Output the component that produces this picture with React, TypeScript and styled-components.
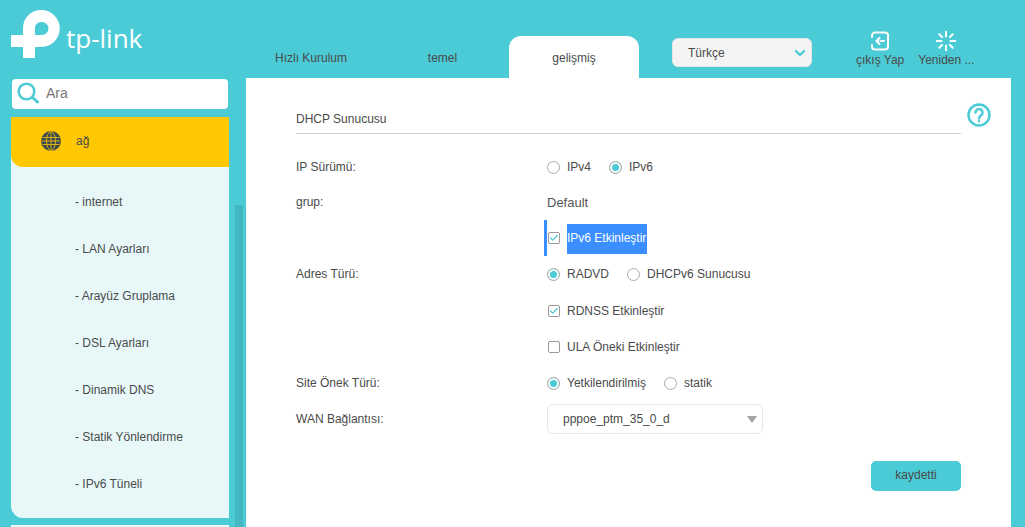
import React from 'react';
import styled, { createGlobalStyle } from 'styled-components';
import { Check, ChevronDown } from 'lucide-react';

const TEAL = '#4acbd6';

const GlobalStyle = createGlobalStyle`
  html, body {
    margin: 0;
    height: 100%;
    overflow: hidden;
    background: ${TEAL};
    font-family: "Liberation Sans", Arial, sans-serif;
    font-size: 12px;
    line-height: 14px;
    color: #4a4a4a;
  }
`;

const menuItems = ['internet', 'LAN Ayarları', 'Arayüz Gruplama', 'DSL Ayarları', 'Dinamik DNS', 'Statik Yönlendirme', 'IPv6 Tüneli'];

const App: React.FC = () => {
  return (
    <Page>
      <GlobalStyle />
      <Header>
        <Logo>
          <svg width="54" height="54" viewBox="0 0 54 54">
            <path
              fillRule="evenodd"
              fill="#fff"
              d="M16 53V42H4V30H16V23A18 18 0 0 1 34 5A18.500 18.500 0 0 1 34.500 42H28V53ZM28 30H35A6.500 6.500 0 0 0 35 17H34A6 6 0 0 0 28 23Z"
            />
          </svg>
          <LogoWord>tp-link</LogoWord>
        </Logo>
        <Tabs>
          <Tab>Hızlı Kurulum</Tab>
          <Tab>temel</Tab>
          <Tab $active>gelişmiş</Tab>
        </Tabs>
        <LangSelect>
          Türkçe
          <ChevronDown size={16} strokeWidth={3.5} color={TEAL} />
        </LangSelect>
        <HeaderActions>
          <HeaderAction>
            <svg width="20" height="20" viewBox="0 0 20 20" fill="none" stroke="#fff" strokeWidth="2" strokeLinecap="round">
              <path d="M2 6V4.500a3 3 0 0 1 3-3h10a3 3 0 0 1 3 3v11a3 3 0 0 1-3 3H5a3 3 0 0 1-3-3V14" />
              <path d="M9.500 7L6.500 10l3 3M7 10h1.500M11 10h3" />
            </svg>
            çıkış Yap
          </HeaderAction>
          <HeaderAction>
            <svg width="20" height="20" viewBox="0 0 20 20" fill="none" stroke="#fff" strokeWidth="2" strokeLinecap="round">
              <path d="M10 0.500v5M10 14.500v5M0.500 10h5M14.500 10h5M3.300 3.300l2.800 2.800M13.900 13.900l2.800 2.800M3.300 16.700l2.800-2.800M13.900 6.100l2.800-2.800" />
            </svg>
            Yeniden ...
          </HeaderAction>
        </HeaderActions>
      </Header>
      <Body>
        <Sidebar>
          <SideColumn>
            <SearchBox>
              <svg width="22" height="22" viewBox="0 0 22 22" fill="none" stroke={TEAL} strokeWidth="2.500">
                <circle cx="9.500" cy="9.500" r="7.800" />
                <path d="M15.500 15.500L20.500 20" strokeWidth="3" strokeLinecap="round" />
              </svg>
              Ara
            </SearchBox>
            <Menu>
              <MenuHead>
                <svg width="20" height="20" viewBox="0 0 20 20" fill="none">
                  <circle cx="10" cy="10" r="10" fill="#3c4a50" />
                  <g stroke="#ffc800" strokeWidth="0.800">
                    <ellipse cx="10" cy="10" rx="4.500" ry="9.500" />
                    <path d="M10 0.500v19M1.500 6.500h17M0.500 10h19M1.500 13.500h17" />
                  </g>
                </svg>
                ağ
              </MenuHead>
              <SubMenu>
                {menuItems.map(item => (
                  <SubItem key={item}>- {item}</SubItem>
                ))}
              </SubMenu>
            </Menu>
            <NextMenu />
          </SideColumn>
          <ScrollTrack />
        </Sidebar>
        <Panel>
          <TitleRow>
            <Title>DHCP Sunucusu</Title>
            <HelpIcon>
              <svg width="24" height="24" viewBox="0 0 24 24" fill="none" stroke={TEAL} strokeWidth="2.500">
                <circle cx="12" cy="12" r="10.500" />
                <path d="M8.500 9.500a3.500 3.500 0 1 1 5.500 2.900c-1.300.9-2 1.500-2 3" strokeLinecap="round" />
                <circle cx="12" cy="18.300" r="0.500" strokeWidth="1.600" />
              </svg>
            </HelpIcon>
          </TitleRow>
          <Form>
            <Row $height={34}>
              <Label>IP Sürümü:</Label>
              <Options>
                <Option><Radio />IPv4</Option>
                <Option><Radio $on />IPv6</Option>
              </Options>
            </Row>
            <Row $height={36}>
              <Label>grup:</Label>
              <StaticValue>Default</StaticValue>
            </Row>
            <Row $height={36}>
              <Label />
              <SelectedOption>
                <CheckBox $on><Check size={10} strokeWidth={3} color={TEAL} /></CheckBox>
                <Highlight>IPv6 Etkinleştir</Highlight>
              </SelectedOption>
            </Row>
            <Row $height={36}>
              <Label>Adres Türü:</Label>
              <Options>
                <Option><Radio $on />RADVD</Option>
                <Option><Radio />DHCPv6 Sunucusu</Option>
              </Options>
            </Row>
            <Row $height={38}>
              <Label />
              <Option><CheckBox $on><Check size={10} strokeWidth={3} color={TEAL} /></CheckBox>RDNSS Etkinleştir</Option>
            </Row>
            <Row $height={34}>
              <Label />
              <Option><CheckBox />ULA Öneki Etkinleştir</Option>
            </Row>
            <Row $height={38}>
              <Label>Site Önek Türü:</Label>
              <Options>
                <Option><Radio $on />Yetkilendirilmiş</Option>
                <Option><Radio />statik</Option>
              </Options>
            </Row>
            <Row $height={34}>
              <Label>WAN Bağlantısı:</Label>
              <WanSelect>pppoe_ptm_35_0_d<Caret /></WanSelect>
            </Row>
          </Form>
          <Actions>
            <SaveButton>kaydetti</SaveButton>
          </Actions>
        </Panel>
      </Body>
    </Page>
  );
};

// Styled Components
const Page = styled.div`
  width: 1025px;
  height: 527px;
  overflow: hidden;
  display: flex;
  flex-direction: column;
`;

const Header = styled.header`
  height: 78px;
  flex: none;
  display: flex;
  align-items: flex-end;
`;

const Logo = styled.div`
  width: 246px;
  height: 78px;
  padding: 5px 0 0 7px;
  box-sizing: border-box;
  display: flex;
  align-items: flex-start;
  flex: none;
`;

const LogoWord = styled.span`
  margin: 16px 0 0 5px;
  font-family: "Open Sans", sans-serif;
  font-weight: 400;
  font-size: 26px;
  line-height: 34px;
  color: #fff;
`;

const Tabs = styled.nav`
  display: flex;
  gap: 1.5px;
  width: 393px;
  flex: none;
`;

const Tab = styled.div<{ $active?: boolean }>`
  width: 130px;
  height: 42px;
  display: flex;
  align-items: center;
  justify-content: center;
  padding-top: 1px;
  box-sizing: border-box;
  border-radius: 12px 12px 0 0;
  background: ${props => (props.$active ? '#fff' : 'transparent')};
`;

const LangSelect = styled.div`
  width: 140px;
  height: 29px;
  margin: 0 0 11px 33px;
  padding: 0 3px 0 15px;
  box-sizing: border-box;
  display: flex;
  align-items: center;
  justify-content: space-between;
  flex: none;
  background: #f4f4f4;
  border: 1px solid #e6e6e6;
  border-radius: 6px;
`;

const HeaderActions = styled.div`
  display: flex;
  margin: 0 0 11px 44px;
  gap: 14px;
`;

const HeaderAction = styled.div`
  display: flex;
  flex-direction: column;
  align-items: center;
  gap: 2px;
  white-space: nowrap;
`;

const Body = styled.div`
  flex: 1;
  display: flex;
  min-height: 0;
`;

const Sidebar = styled.aside`
  width: 246px;
  flex: none;
  display: flex;
  padding-left: 11px;
  box-sizing: border-box;
`;

const SideColumn = styled.div`
  width: 218px;
  flex: none;
  display: flex;
  flex-direction: column;
`;

const SearchBox = styled.div`
  height: 30px;
  margin: 1px 0 8px 1px;
  width: 216px;
  padding: 0 0 2px 5px;
  box-sizing: border-box;
  display: flex;
  align-items: center;
  gap: 7px;
  flex: none;
  background: #fff;
  border-radius: 4px;
  color: #777;
  font-size: 14px;
`;

const Menu = styled.div`
  height: 401px;
  flex: none;
  background: #e8f8f9;
  border-radius: 0 0 0 12px;
  display: flex;
  flex-direction: column;
`;

const MenuHead = styled.div`
  height: 50px;
  flex: none;
  background: #ffc800;
  border-radius: 0 0 0 12px;
  display: flex;
  align-items: center;
  gap: 15px;
  padding: 0 0 3px 30px;
  box-sizing: border-box;
`;

const SubMenu = styled.ul`
  list-style: none;
  margin: 0;
  padding: 12px 0 0 64px;
`;

const SubItem = styled.li`
  height: 47px;
  line-height: 47px;
`;

const NextMenu = styled.div`
  height: 20px;
  margin-top: 7px;
  flex: none;
  background: #e8f8f9;
`;

const ScrollTrack = styled.div`
  width: 8px;
  margin: 127px 0 0 6px;
  flex: none;
  background: #43b8c3;
`;

const Panel = styled.main`
  width: 765px;
  flex: none;
  background: #fff;
  padding: 0 50px;
  box-sizing: border-box;
`;

const TitleRow = styled.div`
  position: relative;
  height: 56px;
  border-bottom: 1px solid #cfcfcf;
  display: flex;
  align-items: flex-end;
  padding-bottom: 7px;
  box-sizing: border-box;
`;

const Title = styled.h2`
  margin: 0;
  font-size: 12px;
  font-weight: 400;
  line-height: 14px;
`;

const HelpIcon = styled.div`
  position: absolute;
  right: -30px;
  top: 25px;
  width: 24px;
  height: 24px;
`;

const Form = styled.div`
  padding-top: 16px;
  display: flex;
  flex-direction: column;
`;

const Row = styled.div<{ $height: number }>`
  height: ${props => props.$height}px;
  display: flex;
  align-items: center;
`;

const Label = styled.div`
  width: 251px;
  flex: none;
`;

const Options = styled.div`
  display: flex;
  gap: 18px;
`;

const Option = styled.label`
  display: flex;
  align-items: center;
  gap: 7px;
`;

const Radio = styled.span<{ $on?: boolean }>`
  width: 13px;
  height: 13px;
  flex: none;
  box-sizing: border-box;
  border: 1px solid #aaa;
  border-radius: 50%;
  background: ${props => (props.$on ? TEAL : '#fff')};
  box-shadow: ${props => (props.$on ? 'inset 0 0 0 2px #fff' : 'none')};
`;

const CheckBox = styled.span<{ $on?: boolean }>`
  width: 12px;
  height: 12px;
  flex: none;
  margin-left: 1px;
  box-sizing: border-box;
  border: 1px solid #999;
  border-radius: 2px;
  display: flex;
  align-items: center;
  justify-content: center;
  background: #fff;
`;

const StaticValue = styled.div`
  padding-top: 2px;
  font-size: 13px;
  color: #555;
`;

const SelectedOption = styled.div`
  position: relative;
  height: 36px;
  display: flex;
  align-items: center;
  gap: 7px;

  &::before {
    content: '';
    position: absolute;
    left: -3px;
    top: 0;
    width: 3px;
    height: 36px;
    background: #3a8eff;
  }
`;

const Highlight = styled.span`
  width: 80px;
  height: 30px;
  margin-top: 2px;
  line-height: 28px;
  overflow: hidden;
  white-space: nowrap;
  background: #3a8eff;
  color: #fff;
`;

const WanSelect = styled.div`
  position: relative;
  width: 216px;
  height: 30px;
  padding-left: 15px;
  box-sizing: border-box;
  display: flex;
  align-items: center;
  border: 1px solid #e6e6e6;
  border-radius: 6px;
`;

const Caret = styled.span`
  position: absolute;
  right: 5px;
  top: 11px;
  border-left: 5px solid transparent;
  border-right: 5px solid transparent;
  border-top: 7px solid #a3a3a3;
`;

const Actions = styled.div`
  display: flex;
  justify-content: flex-end;
  padding-top: 25px;
`;

const SaveButton = styled.button`
  width: 90px;
  height: 30px;
  padding: 0 0 2px;
  border: 0;
  border-radius: 5px;
  background: ${TEAL};
  color: #4a4a4a;
  font: inherit;
`;

export default App;
